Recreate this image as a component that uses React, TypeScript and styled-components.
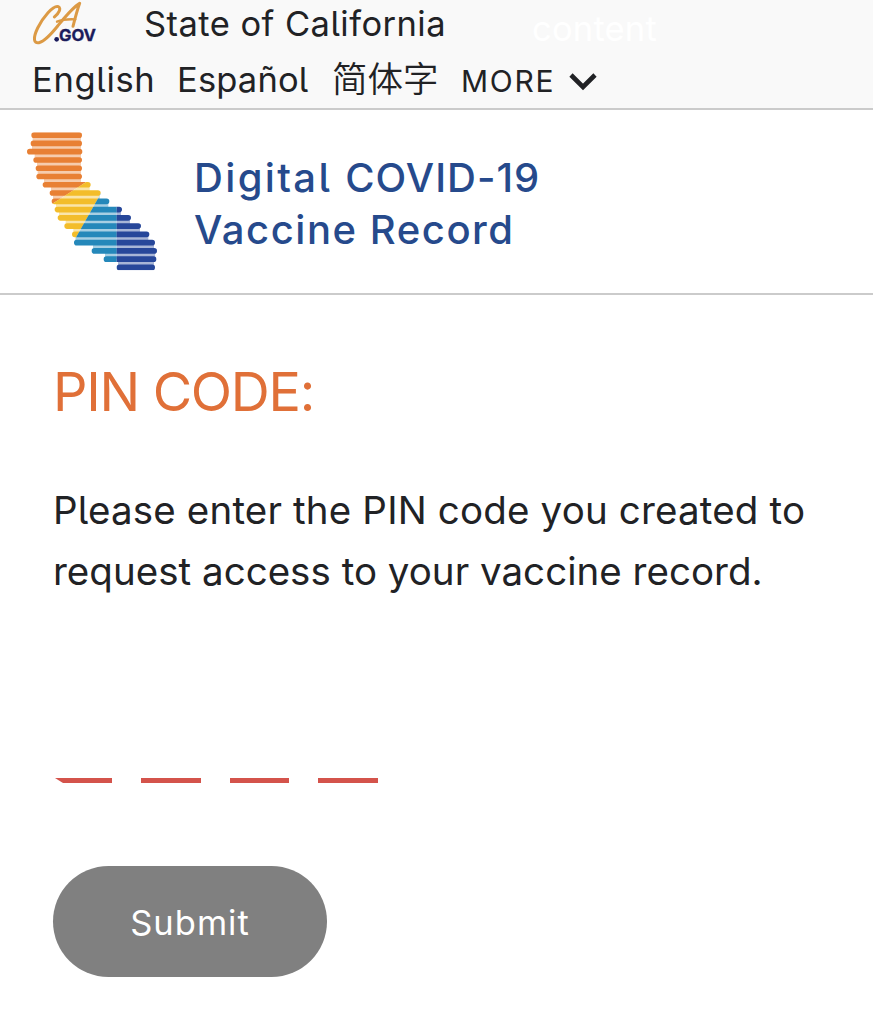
import React from "react";
import styled, { createGlobalStyle } from "styled-components";

const GlobalStyle = createGlobalStyle`
  * { box-sizing: border-box; }
  body {
    margin: 0;
    background: #fff;
    color: #212225;
    font-family: Inter, "Noto Sans CJK SC", sans-serif;
    font-feature-settings: "cv05";
  }
`;

const Page = styled.div`
  min-height: 1025px;
  overflow: hidden;
`;

const UtilityHeader = styled.header`
  height: 110px;
  background: #f9f9f9;
  border-bottom: 2px solid #cbcbcb;
`;

const StateRow = styled.div`
  display: flex;
  height: 46px;
  padding-left: 32px;
  line-height: 47px;
  white-space: nowrap;
`;

const StateName = styled.span`
  width: 388px;
  margin-left: 46px;
  font-size: 34.5px;
  letter-spacing: 0.45px;
`;

const SkipLink = styled.a`
  font-size: 34.5px;
  line-height: 57px;
  letter-spacing: 0.2px;
  color: #fff;
`;

const LanguageRow = styled.nav`
  display: flex;
  align-items: baseline;
  height: 62px;
  padding: 6px 0 0 32px;
  line-height: 55px;
  white-space: nowrap;
`;

const Language = styled.a<{ $width: number; $size?: number; $spacing?: number; $light?: boolean }>`
  width: ${(p) => p.$width}px;
  font-size: ${(p) => p.$size ?? 34.5}px;
  font-weight: ${(p) => (p.$light ? 350 : 400)};
  letter-spacing: ${(p) => p.$spacing ?? 0}px;
`;

const Brand = styled.section`
  display: flex;
  height: 185px;
  padding: 20px 0 0 26px;
  border-bottom: 2px solid #cbcbcb;
`;

const BrandTitle = styled.h1`
  margin: 22px 0 0 36px;
  color: #264a8c;
  font-size: 40px;
  font-weight: 500;
  line-height: 51.5px;
  white-space: nowrap;
`;

const Content = styled.main`
  padding: 64px 53px 0;
`;

const Heading = styled.h2`
  margin: 0;
  color: #e07038;
  font-size: 54px;
  font-weight: 400;
  line-height: 66px;
  letter-spacing: -1.3px;
`;

const Instructions = styled.p`
  margin: 55px 0 0;
  font-size: 38.5px;
  line-height: 60.5px;
  white-space: nowrap;
`;

const Line = styled.span<{ $spacing: number }>`
  display: block;
  letter-spacing: ${(p) => p.$spacing}px;
`;

const Word = styled.span<{ $spacing: number }>`
  letter-spacing: ${(p) => p.$spacing}px;
`;

const PinFields = styled.div`
  display: flex;
  gap: 29px;
  margin: 177px 0 0 2px;
`;

const PinSlot = styled.span<{ $first?: boolean }>`
  width: ${(p) => (p.$first ? 57 : 59.7)}px;
  height: 5px;
  background: #d4534b;
  clip-path: ${(p) => (p.$first ? "polygon(0 0, 100% 0, 100% 100%, 8px 100%)" : "none")};
`;

const Submit = styled.button`
  display: block;
  width: 274px;
  height: 111px;
  margin-top: 83px;
  padding: 2px 0 0;
  border: 0;
  border-radius: 56px;
  background: #808080;
  color: #fff;
  font: inherit;
  font-size: 34.5px;
  letter-spacing: 1px;
`;

const stripes: [number, number][] = [
  [64, 216], [62, 216], [51, 217], [70, 216], [77, 216], [79, 216],
  [98, 242], [119, 272], [125, 298], [134, 336], [143, 363], [163, 393],
  [186, 418], [192, 435], [245, 441], [281, 439], [320, 435],
];
const PITCH = 24.8;

const Regions = () => (
  <>
    <path d="M40 20H260V166L125 253H40Z" fill="#e88034" />
    <path d="M260 166L125 253V358H195L278 211V166Z" fill="#f3bd2b" />
    <path d="M278 211L195 358H180V470H320V211Z" fill="#2588ba" />
    <path d="M320 200H460V470H320Z" fill="#27479a" />
  </>
);

const CaliforniaLogo = () => (
  <svg width="132" height="144" viewBox="48 30 396 432">
    <clipPath id="stripes">
      {stripes.map(([a, b], i) => (
        <rect key={i} x={a} y={37 + i * PITCH} width={b - a} height="17" rx="8.5" />
      ))}
    </clipPath>
    <clipPath id="gaps">
      {stripes.slice(1).map(([a, b], i) => {
        const left = Math.max(a, stripes[i][0]) + 4;
        const right = Math.min(b, stripes[i][1]) - 3;
        return <rect key={i} x={left} y={45 + i * PITCH} width={right - left} height={PITCH} />;
      })}
    </clipPath>
    <g clipPath="url(#gaps)" opacity="0.4"><Regions /></g>
    <g clipPath="url(#stripes)"><Regions /></g>
  </svg>
);

const CaGovLogo = () => (
  <svg width="66" height="46" viewBox="96 0 198 138">
    <g fill="none" stroke="#dc9a45" strokeWidth="9" strokeLinecap="round" strokeLinejoin="round">
      <path d="M163 51C176 42 185 24 175 20C160 14 128 53 113 84C98 115 101 131 117 128C135 124 153 103 173 78C195 51 218 22 239 10C232 29 226 52 219 79" />
      <path d="M171 65C187 58 207 57 226 58" strokeWidth="7" />
    </g>
    <circle cx="170" cy="118" r="7" fill="#1b1c5c" />
    <text x="177" y="123" textLength="111" lengthAdjust="spacingAndGlyphs" fill="#1b1c5c" stroke="#1b1c5c" strokeWidth="1" fontFamily="Inter, sans-serif" fontSize="48" fontWeight="700">GOV</text>
  </svg>
);

const Chevron = () => (
  <svg width="28" height="20" viewBox="0 0 28 20" fill="none" stroke="#212225" strokeWidth="4.6">
    <path d="M2 3L14 15L26 3" />
  </svg>
);

export default function App() {
  return (
    <Page>
      <GlobalStyle />
      <UtilityHeader>
        <StateRow>
          <CaGovLogo />
          <StateName>State of California</StateName>
          <SkipLink>content</SkipLink>
        </StateRow>
        <LanguageRow>
          <Language $width={145} $spacing={0.65}>English</Language>
          <Language $width={155} $spacing={0.15}>Español</Language>
          <Language $width={129} $size={35.5} $light>简体字</Language>
          <Language $width={108} $size={30} $spacing={1.7}>MORE</Language>
          <Chevron />
        </LanguageRow>
      </UtilityHeader>
      <Brand>
        <CaliforniaLogo />
        <BrandTitle>
          <Line $spacing={2.35}>Digital <Word $spacing={1}>COVID-19</Word></Line>
          <Line $spacing={1.55}>Vaccine Record</Line>
        </BrandTitle>
      </Brand>
      <Content>
        <Heading>PIN CODE:</Heading>
        <Instructions>
          <Line $spacing={0.17}>Please enter the PIN code you created to</Line>
          <Line $spacing={0.02}>request access to your vaccine record.</Line>
        </Instructions>
        <PinFields>
          <PinSlot $first />
          <PinSlot />
          <PinSlot />
          <PinSlot />
        </PinFields>
        <Submit>Submit</Submit>
      </Content>
    </Page>
  );
}
